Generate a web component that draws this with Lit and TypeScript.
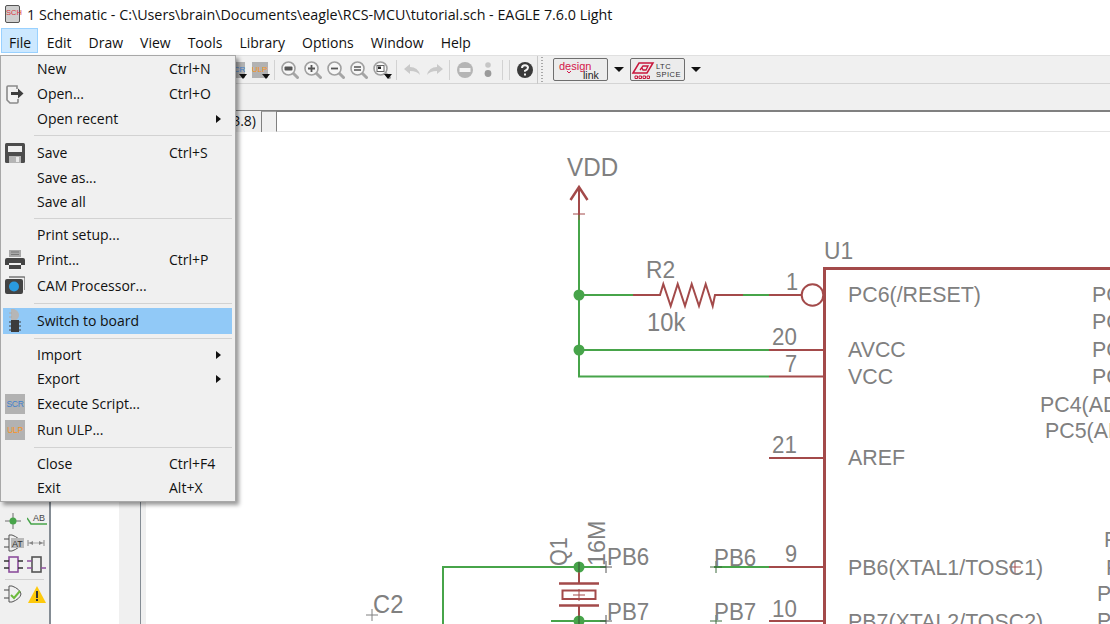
import { LitElement, html, svg, css } from 'lit';
import { customElement } from 'lit/decorators.js';
import { classMap } from 'lit/directives/class-map.js';

//
// menu contents, a row per entry, sep for the divider lines
//
type MenuRow = { label?: string; key?: string; icon?: string; sub?: boolean; active?: boolean; sep?: boolean };

const fileMenu: MenuRow[] = [
  { label: 'New', key: 'Ctrl+N' },
  { label: 'Open...', key: 'Ctrl+O', icon: 'open' },
  { label: 'Open recent', sub: true },
  { sep: true },
  { label: 'Save', key: 'Ctrl+S', icon: 'save' },
  { label: 'Save as...' },
  { label: 'Save all' },
  { sep: true },
  { label: 'Print setup...' },
  { label: 'Print...', key: 'Ctrl+P', icon: 'print' },
  { label: 'CAM Processor...', icon: 'cam' },
  { sep: true },
  { label: 'Switch to board', icon: 'switch', active: true },
  { sep: true },
  { label: 'Import', sub: true },
  { label: 'Export', sub: true },
  { label: 'Execute Script...', icon: 'scr' },
  { label: 'Run ULP...', icon: 'ulp' },
  { sep: true },
  { label: 'Close', key: 'Ctrl+F4' },
  { label: 'Exit', key: 'Alt+X' },
];

const menuBar = ['File', 'Edit', 'Draw', 'View', 'Tools', 'Library', 'Options', 'Window', 'Help'];

const menuIcons: Record<string, unknown> = {
  open: svg`<svg width="20" height="20" viewBox="0 0 20 20">
    <path d="M3 2h9v3M3 2q-1 0-1 1v13l3 3h7q1 0 1-1v-3" fill="#f4f4f4" stroke="#8a8a8a" stroke-width="1.6"/>
    <path d="M6 8h7V4.5l5.5 5-5.5 5V11H6z" fill="#3f3f3f"/></svg>`,
  save: svg`<svg width="20" height="20" viewBox="0 0 20 20">
    <path d="M1.5 0h17q1.500 0 1.500 1.500v17q0 1.500-1.500 1.500h-17q-1.500 0-1.500-1.500v-17q0-1.500 1.500-1.500z" fill="#4c4c4c"/>
    <rect x="3" y="3" width="14" height="6" fill="#efefef"/>
    <rect x="4" y="13" width="12" height="7" fill="#b4b4b4"/>
    <rect x="11" y="14" width="3" height="5" fill="#e8e8e8"/></svg>`,
  print: svg`<svg width="20" height="20" viewBox="0 0 20 20">
    <rect x="4" y="0" width="12" height="7" fill="#a8a8a8"/>
    <path d="M6 2h8M6 4.500h8" stroke="#777"/>
    <path d="M2 8h16q2 0 2 2v5h-4v-2H4v2H0v-5q0-2 2-2z" fill="#444"/>
    <rect x="4" y="15" width="12" height="4" fill="#444"/></svg>`,
  cam: svg`<svg width="20" height="20" viewBox="0 0 20 20">
    <path d="M4 1h15q1 0 1 1v12" fill="none" stroke="#777" stroke-width="1.400"/>
    <rect x="0" y="3" width="18" height="15" rx="2" fill="#444"/>
    <circle cx="9" cy="10.500" r="5" fill="#2a9be0"/></svg>`,
  switch: svg`<svg width="12" height="24" viewBox="0 0 12 24">
    <path d="M2 0h3q5 2 5 6t-5 6H2z" fill="#b6b6b6"/>
    <path d="M0 4h3M0 8h3" stroke="#aaa"/>
    <rect x="2" y="11" width="8" height="12" fill="#3c3c3c"/>
    <path d="M0 13h12M0 17h12M0 21h12" stroke="#3c3c3c"/></svg>`,
};

//
// toolbar glyphs, the magnifiers share a lens and a handle
//
const lens = (inner: unknown) => svg`<svg width="18" height="18" viewBox="0 0 18 18">
  <path d="M12 12l4.500 4.500" stroke="#a5a5a5" stroke-width="3" stroke-linecap="round"/>
  <circle cx="7.500" cy="7.500" r="6.500" fill="#f6f6f6" stroke="#a0a0a0" stroke-width="1.600"/>
  ${inner}</svg>`;

const zoomIcons = [
  lens(svg`<rect x="3.500" y="5.500" width="8" height="4" rx="1" fill="#555"/>`),
  lens(svg`<path d="M4 7.500h7M7.500 4v7" stroke="#555" stroke-width="1.800"/>`),
  lens(svg`<path d="M4 7.500h7" stroke="#555" stroke-width="1.800"/>`),
  lens(svg`<path d="M4 6h7M4 9h7" stroke="#555" stroke-width="1.600"/>`),
  lens(svg`<rect x="4" y="4.500" width="7" height="6" fill="#fff" stroke="#666"/><rect x="5" y="5.500" width="3" height="2.500" fill="#222"/>`),
];

const undoIcon = svg`<svg width="18" height="14" viewBox="0 0 18 14">
  <path d="M1 6l6-5v3q8 0 10 8-3-4-10-4v3z" fill="#c9c9c9"/></svg>`;
const redoIcon = svg`<svg width="18" height="14" viewBox="0 0 18 14">
  <path d="M17 6l-6-5v3q-8 0-10 8 3-4 10-4v3z" fill="#c9c9c9"/></svg>`;
const stopIcon = svg`<svg width="18" height="18" viewBox="0 0 18 18">
  <circle cx="9" cy="9" r="8" fill="#b5b5b5"/><rect x="3.500" y="7" width="11" height="4" fill="#f4f4f4"/></svg>`;
const goIcon = svg`<svg width="10" height="18" viewBox="0 0 10 18">
  <circle cx="5" cy="4" r="2.800" fill="#c6c6c6"/><circle cx="5" cy="12.500" r="3.400" fill="#9a9a9a"/></svg>`;
const helpIcon = svg`<svg width="18" height="18" viewBox="0 0 18 18">
  <circle cx="9" cy="9" r="8" fill="#3a3a3a"/>
  <path d="M6 7q0-2.800 3-2.800t3 2.600q0 1.500-3 3v1" fill="none" stroke="#f4f4f4" stroke-width="2"/>
  <rect x="8" y="12.500" width="2" height="2" fill="#f4f4f4"/></svg>`;

const designLink = svg`<svg width="53" height="21" viewBox="1 1 53 21" font-family="'Liberation Sans', sans-serif">
  <text x="6" y="12" font-size="11" fill="#d4174a">design</text>
  <path d="M14 13l2 2 2-2" fill="none" stroke="#d4174a"/>
  <text x="30" y="21" font-size="10.500" fill="#222">link</text></svg>`;
const ltcSpice = svg`<svg width="53" height="21" viewBox="1 1 53 21" font-family="'Liberation Sans', sans-serif">
  <path d="M3 15L9 5H23L17 15z" fill="none" stroke="#c8173c" stroke-width="1.500"/>
  <path d="M10 12l3-4h5l-2 4h-3l-1-2" fill="none" stroke="#c8173c" stroke-width="1.300"/>
  <path d="M5 18h2.500v2.500H5zM9 18h2.500v2.500H9zM13 18h2.500v2.500H13zM17 18h2.500v2.500H17z" fill="none" stroke="#c8173c"/>
  <text x="26" y="11" font-size="7.500" letter-spacing="0.500" fill="#333">LTC</text>
  <text x="26" y="19" font-size="7.500" letter-spacing="0.500" fill="#333">SPICE</text></svg>`;

//
// left hand tool strip, only the bottom rows show from under the menu
//
const gate = (inner: unknown) => svg`<svg width="20" height="20" viewBox="0 0 20 20">
  <path d="M0 6h5M0 14h5" stroke="#444"/>
  <path d="M5 2h3q8 3 9 8-1 5-9 8H5z" fill="none" stroke="#555"/>${inner}</svg>`;

const stripRows: unknown[][] = [
  [
    svg`<svg width="20" height="20" viewBox="0 0 20 20"><rect x="1" y="0" width="10" height="4" fill="#2e6fb5"/><rect x="8" y="0" width="10" height="1" fill="#222"/></svg>`,
    svg`<svg width="20" height="20" viewBox="0 0 20 20"><rect x="2" y="0" width="6" height="4" fill="#999"/><rect x="9" y="0" width="9" height="1" fill="#3a8f3d"/></svg>`,
  ],
  [
    svg`<svg width="20" height="20" viewBox="0 0 20 20"><path d="M1 10h16M9 2v16" stroke="#999" stroke-width="1.500"/><circle cx="9" cy="10" r="3.500" fill="#47a44a"/></svg>`,
    svg`<svg width="20" height="20" viewBox="0 0 20 20"><path d="M0 7l4 6h16" fill="none" stroke="#47a44a" stroke-width="1.500"/><text x="6" y="10" font-size="9" font-family="'Liberation Sans', sans-serif" fill="#444">AB</text></svg>`,
  ],
  [
    gate(svg`<rect x="7" y="5" width="13" height="10" fill="#b9b9b9"/><text x="8" y="14" font-size="9" font-family="'Liberation Sans', sans-serif" fill="#333">AT</text>`),
    svg`<svg width="20" height="20" viewBox="0 0 20 20"><path d="M1 10h16" stroke="#aaa"/><path d="M1 7v6M17 7v6" stroke="#888"/><path d="M2 10l4-2v4zM16 10l-4-2v4z" fill="#888"/></svg>`,
  ],
  [
    svg`<svg width="20" height="20" viewBox="0 0 20 20"><rect x="5" y="2" width="9" height="15" fill="none" stroke="#8d4f9d" stroke-width="1.600"/><path d="M0 6h5M0 13h5M14 6h5M14 13h5" stroke="#333" stroke-width="1.500"/></svg>`,
    svg`<svg width="20" height="20" viewBox="0 0 20 20"><rect x="5" y="2" width="9" height="15" fill="none" stroke="#555" stroke-width="1.600"/><path d="M0 6h5M0 13h5M14 13h5" stroke="#8d4f9d" stroke-width="1.500"/></svg>`,
  ],
];

const checkGate = gate(svg`<path d="M7 11l3 3 6-7" fill="none" stroke="#6dbb3c" stroke-width="2"/>`);
const warnIcon = svg`<svg width="18" height="17" viewBox="0 0 18 17">
  <path d="M9 0l9 17H0z" fill="#fdc90c"/><rect x="8" y="5" width="2" height="7" fill="#333"/><rect x="8" y="13" width="2" height="2" fill="#333"/></svg>`;

//
// schematic, coordinates are page pixels, the svg viewBox starts where the canvas does
//
const GREEN = '#47a44a';
const RED = '#a34a4a';
const GREY = '#808080';

const greenWires = [
  'M579 215V376.500H769',
  'M579 295H633',
  'M743 295H769',
  'M579 350H769',
  'M714 567H769',
  'M443 624V567H606',
  'M551 621H606',
];

const redWires = [
  'M579 187V215',
  'M633 295H660L663.300 284L670.700 306L677.700 284L685 306L691.700 284L699 306L705.700 284L712.700 306L715 295H743',
  'M769 295H802',
  'M769 350H824',
  'M769 376.500H824',
  'M769 458H824',
  'M769 567H824',
  'M769 621H824',
  'M579 567V583M579 605V621',
];

const labels: [string, number, number, number][] = [
  ['VDD', 567, 176, 25.500],
  ['R2', 646, 278, 24],
  ['10k', 647, 331, 25],
  ['U1', 824, 259, 24],
  ['1', 786, 290, 23],
  ['20', 772, 345, 23.500],
  ['7', 785, 372, 23],
  ['21', 772, 453, 23.500],
  ['9', 785, 562, 23],
  ['10', 772, 617, 23.500],
  ['PC6(/RESET)', 848, 302, 22.500],
  ['AVCC', 848, 357, 22.500],
  ['VCC', 848, 384, 22.500],
  ['AREF', 848, 465, 22.500],
  ['PC0(ADC0)', 1092, 302, 22.500],
  ['PC1(ADC1)', 1092, 329, 22.500],
  ['PC2(ADC2)', 1092, 357, 22.500],
  ['PC3(ADC3)', 1092, 384, 22.500],
  ['PC4(ADC4/SDA)', 1040, 412, 22.500],
  ['PC5(ADC5/SCL)', 1045, 438, 22.500],
  ['PB6(XTAL1/TOSC1)', 848, 575, 22.500],
  ['PB7(XTAL2/TOSC2)', 848, 629, 22.500],
  ['PD0(RXD)', 1104, 547, 22.500],
  ['PD1(TXD)', 1106, 575, 22.500],
  ['PD2(INT0)', 1097, 601, 22.500],
  ['PD3(INT1)', 1097, 628, 22.500],
  ['PB6', 714, 566, 23.500],
  ['PB7', 714, 620, 23.500],
  ['PB6', 607, 565, 23.500],
  ['PB7', 607, 620, 23.500],
  ['C2', 373, 613, 25],
];

const cross = (x: number, y: number, color: string) =>
  svg`<path d="M${x - 6} ${y}H${x + 6}M${x} ${y - 6}V${y + 6}" stroke="${color}" stroke-width="1" fill="none"/>`;

const schematic = svg`<svg class="sheet" width="964" height="492" viewBox="146 132 964 492">
  <g fill="none" stroke="${GREEN}" stroke-width="2">
    ${greenWires.map((d) => svg`<path d="${d}"/>`)}
  </g>
  <g fill="none" stroke="${RED}" stroke-width="2">
    ${redWires.map((d) => svg`<path d="${d}"/>`)}
    <path d="M570.500 200L579 187L587.500 200" stroke-width="2.500"/>
    <circle cx="812.500" cy="295" r="10.800"/>
    <path d="M559 583.500H599M559 605.500H599"  stroke-width="2.500"/>
    <rect x="562.500" y="590.500" width="33" height="8.500"/>
    <path d="M1110 268.500H824.500V624" stroke-width="3"/>
  </g>
  ${cross(579, 214, RED)}
  ${cross(579, 595, RED)}
  ${cross(1015, 567, RED)}
  ${cross(716, 567, '#3d6b3d')}
  ${cross(716, 621, '#3d6b3d')}
  ${cross(606, 567, '#555')}
  ${cross(606, 621, '#555')}
  ${cross(372, 615, GREY)}
  <g fill="${GREEN}">
    <circle cx="579" cy="295" r="5.500"/>
    <circle cx="579" cy="350" r="5.500"/>
    <circle cx="579" cy="567" r="5.500"/>
    <circle cx="579" cy="621" r="5.500"/>
  </g>
  <path d="M579 562V572M579 616V626" stroke="#3d6b3d" stroke-width="1.500"/>
  <g fill="${GREY}" font-family="'Liberation Sans', sans-serif">
    ${labels.map(([t, x, y, s]) => svg`<text transform="translate(${x} ${y}) scale(.95 1)" font-size="${s}">${t}</text>`)}
    <text transform="translate(567 566) rotate(-90) scale(.9 1)" font-size="24">Q1</text>
    <text transform="translate(605 566) rotate(-90) scale(.97 1)" font-size="24">16M</text>
  </g>
</svg>`;

@customElement('app-root')
export class AppRoot extends LitElement {
  static styles = css`
    :host {
      display: block;
      position: relative;
      width: 1110px;
      height: 624px;
      overflow: hidden;
      background: #fff;
      font-family: 'Open Sans', 'Liberation Sans', sans-serif;
      font-size: 14px;
      color: #111;
    }
    .title { height: 28px; display: flex; align-items: center; padding-left: 5px; gap: 7px; font-size: 14.3px; }
    .doc { width: 15px; height: 18px; background: #cfcfcf; border: 1px solid #555; border-radius: 2px;
      font: 7.5px 'Liberation Sans', sans-serif; color: #d8343c; text-align: center; line-height: 14px; box-sizing: border-box; }
    .menubar { height: 27px; display: flex; padding-left: 1px; font-size: 14px; }
    .menubar span { padding: 0 7.5px; line-height: 27px; border: 1px solid transparent; height: 25px; box-sizing: border-box; }
    .menubar span.on { padding: 0 6px 0 7px; background: #cce8ff; border-color: #99d1ff; }

    .toolbar { height: 29px; box-sizing: border-box; display: flex; align-items: center; padding-left: 225px;
      background: #f0f0f0; border-top: 1px solid #e0e0e0; border-bottom: 1px solid #d4d4d4; }
    .tool { width: 23px; height: 22px; display: flex; align-items: center; justify-content: center; position: relative; }
    .tool.more::after { content: ''; position: absolute; right: 1px; bottom: 2px; border: 4px solid transparent;
      border-top: 5px solid #111; border-bottom: 0; }
    .box { width: 16px; height: 16px; background: #b2b2b2; font: 8px 'Liberation Sans', sans-serif; text-align: center; line-height: 16px; }
    .blue { color: #3f80cc; }
    .orange { color: #f7941d; }
    .sep { width: 1px; height: 20px; background: #d2d2d2; margin: 0 3px; }
    .grip { width: 1px; height: 28px; margin: 0 0 0 1px; background: #c8c8c8; }
    .dots { width: 2px; height: 26px; margin: 0 10px 0 3px;
      background: repeating-linear-gradient(to bottom, #a8a8a8 0 1px, transparent 1px 3px); }
    .addon { width: 55px; height: 23px; box-sizing: border-box; border: 1px solid #6e6e6e; border-radius: 2px;
      background: #ececec; display: flex; }
    .drop { width: 22px; display: flex; justify-content: center; }
    .drop::after { content: ''; border: 5px solid transparent; border-top: 5px solid #111; border-bottom: 0; }

    .spare { height: 26px; background: #f0f0f0; }
    .command { height: 22px; box-sizing: border-box; display: flex; background: #f0f0f0; border-top: 1px solid #808080; }
    .coords { width: 256px; text-align: right; line-height: 20px; white-space: nowrap; overflow: hidden; font-size: 14px; }
    .grab { width: 14px; margin-left: 5px; border-left: 1px solid #808080; border-top: 1px solid #a0a0a0; }
    .input { flex: 1; background: #fff; border-left: 1px solid #808080; border-top: 1px solid #808080; border-bottom: 1px solid #e4e4e4; }

    .main { display: flex; height: 492px; }
    .strip { width: 51px; box-sizing: border-box; background: #f0f0f0; border-right: 2px solid #848c94;
      display: flex; flex-direction: column; justify-content: flex-end; padding-bottom: 19px; overflow: hidden; }
    .strip-row { height: 22px; flex: none; display: grid; grid-template-columns: 23px 23px; padding-left: 2px; }
    .strip-row > div { display: flex; align-items: center; justify-content: center; }
    .strip-sep { flex: none; height: 1px; background: #d2d2d2; margin: 3px 5px 3px 5px; }
    .list { width: 68px; background: #fff; }
    .gutter { width: 21px; background: #f0f0f0; border-right: 1px solid #848c94; }
    .pad { width: 5px; background: #f0f0f0; }
    .canvas { flex: 1; background: #fff; overflow: hidden; }
    .sheet { display: block; }

    .menu { position: absolute; left: 0; top: 55px; width: 236px; height: 447px; box-sizing: border-box;
      background: #f0f0f0; border: 1px solid #a8a8a8; padding: 1px 3px 0 2px;
      box-shadow: 3px 3px 4px rgba(0, 0, 0, 0.4); font-size: 14px; }
    .row { display: grid; grid-template-columns: 34px 132px 1fr; align-items: center; height: 24px; }
    .row.tall { height: 26px; }
    .row.active { background: #91c9f7; }
    .row .txt { padding-bottom: 2px; }
    .row .ico { display: flex; justify-content: center; padding-right: 10px; align-items: center; }
    .row .ico svg { display: block; }
    .row .box { width: 20px; height: 20px; flex: none; line-height: 20px; font-size: 8.5px; letter-spacing: -0.3px; }
    .arrow { justify-self: end; margin-right: 11px; border: 4px solid transparent; border-left: 5px solid #111; border-right: 0; }
    .divider { height: 9px; display: flex; align-items: center; padding-left: 31px; }
    .divider::after { content: ''; flex: 1; height: 1px; background: #d2d2d2; }
  `;

  private menuIcon(name?: string) {
    if (name === 'scr') return html`<div class="box blue">SCR</div>`;
    if (name === 'ulp') return html`<div class="box orange">ULP</div>`;
    return name ? menuIcons[name] : '';
  }

  private renderMenu() {
    return html`<div class="menu">
      ${fileMenu.map((r) => r.sep
        ? html`<div class="divider"></div>`
        : html`<div class=${classMap({ row: true, tall: !!r.icon, active: !!r.active })}>
            <div class="ico">${this.menuIcon(r.icon)}</div>
            <div class="txt">${r.label}</div>
            ${r.sub ? html`<div class="arrow"></div>` : html`<div class="txt">${r.key ?? ''}</div>`}
          </div>`)}
    </div>`;
  }

  private renderToolbar() {
    return html`<div class="toolbar">
      <div class="tool more"><div class="box blue">SCR</div></div>
      <div class="tool more"><div class="box orange">ULP</div></div>
      <div class="sep"></div>
      ${zoomIcons.map((z, i) => html`<div class=${classMap({ tool: true, more: i === 4 })}>${z}</div>`)}
      <div class="sep"></div>
      <div class="tool">${undoIcon}</div>
      <div class="tool">${redoIcon}</div>
      <div class="sep"></div>
      <div class="tool">${stopIcon}</div>
      <div class="tool">${goIcon}</div>
      <div class="sep"></div>
      <div class="sep"></div>
      <div class="tool">${helpIcon}</div>
      <div class="grip"></div>
      <div class="dots"></div>
      <div class="addon">${designLink}</div>
      <div class="drop"></div>
      <div class="addon">${ltcSpice}</div>
      <div class="drop"></div>
    </div>`;
  }

  render() {
    return html`
      <div class="title">
        <div class="doc">SCH</div>
        <div>1 Schematic - C:\\Users\\brain\\Documents\\eagle\\RCS-MCU\\tutorial.sch - EAGLE 7.6.0 Light</div>
      </div>
      <div class="menubar">
        ${menuBar.map((m, i) => html`<span class=${classMap({ on: i === 0 })}>${m}</span>`)}
      </div>
      ${this.renderToolbar()}
      <div class="spare"></div>
      <div class="command">
        <div class="coords">0.1 inch (3.8 3.8)</div>
        <div class="grab"></div>
        <div class="input"></div>
      </div>
      <div class="main">
        <div class="strip">
          ${stripRows.map((cells) => html`<div class="strip-row">${cells.map((c) => html`<div>${c}</div>`)}</div>`)}
          <div class="strip-sep"></div>
          <div class="strip-row"><div>${checkGate}</div><div>${warnIcon}</div></div>
        </div>
        <div class="list"></div>
        <div class="gutter"></div>
        <div class="pad"></div>
        <div class="canvas">${schematic}</div>
      </div>
      ${this.renderMenu()}
    `;
  }
}
